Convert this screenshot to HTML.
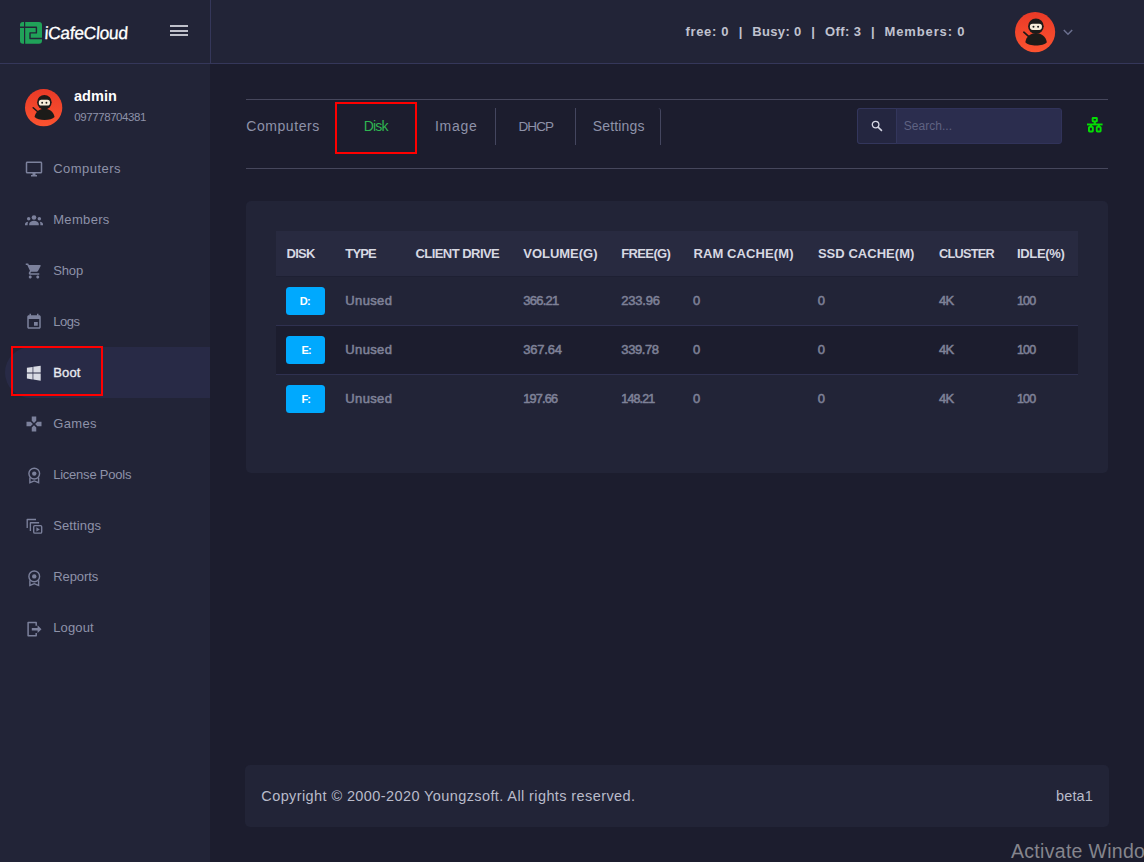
<!DOCTYPE html>
<html><head><meta charset="utf-8"><title>iCafeCloud</title>
<style>
*{box-sizing:border-box;margin:0;padding:0}
html,body{width:1144px;height:862px;overflow:hidden;background:#1c1d2e;font-family:"Liberation Sans",sans-serif;color:#8e92a9}
.abs{position:absolute}
.t{position:absolute;white-space:pre;line-height:1}
#hdr{position:absolute;left:0;top:0;width:1144px;height:64px;background:#222437;border-bottom:1px solid #35375a}
#vline{position:absolute;left:210px;top:0;width:1px;height:63px;background:#35375a}
#side{position:absolute;left:0;top:64px;width:210px;height:798px;background:#222437}
#act{position:absolute;left:4.5px;top:347px;width:205.5px;height:51px;background:#282a46;border-radius:25.5px 0 0 25.5px}
#redm{position:absolute;left:11px;top:346px;width:92px;height:50px;border:2px solid #ff0000}
#redt{position:absolute;left:335px;top:102px;width:82px;height:52px;border:2px solid #ff0000}
.hl{position:absolute;left:246px;width:862px;height:1px;background:#46475c}
.sep{position:absolute;top:108px;width:1px;height:37px;background:#44465f}
#card{position:absolute;left:246px;top:201px;width:862px;height:272px;background:#222437;border-radius:5px}
#thead{position:absolute;left:276px;top:231px;width:802px;height:45px;background:#282a40}
.rl{position:absolute;left:276px;width:802px;height:1px;background:#2f3150}
#row2{position:absolute;left:276px;top:325px;width:802px;height:49px;background:#1c1d2e}
.btn{position:absolute;left:286px;width:39px;height:28px;background:#00a9fe;border-radius:3.5px}
#foot{position:absolute;left:245px;top:765.4px;width:864px;height:61.6px;background:#222437;border-radius:5px}
svg{position:absolute;overflow:visible}
.mi{fill:#7c819c}.wi{fill:#d9dbe4}
</style></head><body>
<div id="hdr"></div><div id="vline"></div>
<div id="side"></div>
<div id="act"></div>

<!-- logo -->
<svg style="left:19.8px;top:22.2px" width="22" height="22" viewBox="0 0 22 22"><rect x="0" y="0" width="22" height="21.8" rx="3" fill="#20a259"/><g stroke="#222437" fill="none" stroke-linecap="butt" stroke-linejoin="round"><path d="M4.6 0V22" stroke-width="1.2"/><path d="M0 5.2H16.4V10.9H10V16.5H22" stroke-width="1.4"/></g></svg>
<div class="t" style="left:43.6px;top:24.6px;font-size:17.5px;color:#fff;letter-spacing:-.35px;-webkit-text-stroke:.3px #fff;transform:skewX(-4deg);transform-origin:0 100%">iCafeCloud</div>
<div class="abs" style="left:170px;top:25px;width:18px;height:2px;background:#bfc0ca"></div>
<div class="abs" style="left:170px;top:29.8px;width:18px;height:2px;background:#bfc0ca"></div>
<div class="abs" style="left:170px;top:34.2px;width:18px;height:2px;background:#bfc0ca"></div>

<!-- avatars -->
<svg style="left:24.9px;top:88.7px" width="37.3" height="37.3" viewBox="0 0 40 40"><linearGradient id="ng1" x1="0" y1="0" x2="0" y2="1"><stop offset="0" stop-color="#e93a27"/><stop offset="1" stop-color="#fb5330"/></linearGradient><circle cx="20" cy="20" r="20" fill="url(#ng1)"/><path d="M8.8 20.1L14.6 25.2" stroke="#1c1b19" stroke-width="1.7" stroke-linecap="round"/><circle cx="20.8" cy="14.2" r="7.8" fill="#1c1b19"/><path d="M10.3 30C11.3 24.2 15.5 21.2 20.9 21.2C26.2 21.2 30.5 24.2 31.7 30C28.2 34.3 13.8 34.3 10.3 30Z" fill="#1c1b19"/><rect x="14.8" y="11.6" width="12" height="6.2" rx="2.8" fill="#f6edd9"/><circle cx="18.4" cy="14.8" r="1" fill="#1c1b19"/><circle cx="23" cy="14.8" r="1" fill="#1c1b19"/></svg>
<svg style="left:1015px;top:12px" width="40.2" height="40.2" viewBox="0 0 40 40"><linearGradient id="ng2" x1="0" y1="0" x2="0" y2="1"><stop offset="0" stop-color="#e93a27"/><stop offset="1" stop-color="#fb5330"/></linearGradient><circle cx="20" cy="20" r="20" fill="url(#ng2)"/><path d="M8.8 20.1L14.6 25.2" stroke="#1c1b19" stroke-width="1.7" stroke-linecap="round"/><circle cx="20.8" cy="14.2" r="7.8" fill="#1c1b19"/><path d="M10.3 30C11.3 24.2 15.5 21.2 20.9 21.2C26.2 21.2 30.5 24.2 31.7 30C28.2 34.3 13.8 34.3 10.3 30Z" fill="#1c1b19"/><rect x="14.8" y="11.6" width="12" height="6.2" rx="2.8" fill="#f6edd9"/><circle cx="18.4" cy="14.8" r="1" fill="#1c1b19"/><circle cx="23" cy="14.8" r="1" fill="#1c1b19"/></svg>

<svg style="left:1063px;top:28.7px" width="10" height="7" viewBox="0 0 10 7"><path d="M0.8 1L5 5.2L9.2 1" fill="none" stroke="#6c7090" stroke-width="1.5"/></svg>

<!-- menu icons -->
<svg class="mi" style="left:24.8px;top:160.3px" width="18" height="18" viewBox="0 0 24 24"><path d="M21 2H3c-1.1 0-2 .9-2 2v12c0 1.1.9 2 2 2h7v2H8v2h8v-2h-2v-2h7c1.1 0 2-.9 2-2V4c0-1.1-.9-2-2-2zm0 14H3V4h18v12z"/></svg>
<svg class="mi" style="left:24.8px;top:211.3px" width="18" height="18" viewBox="0 0 24 24"><circle cx="12" cy="8.6" r="3.1"/><circle cx="4.9" cy="10.3" r="2.3"/><circle cx="19.1" cy="10.3" r="2.3"/><path d="M5.6 19v-1.6c0-2.6 3-4.3 6.4-4.3s6.4 1.700 6.400 4.300V19z"/><path d="M0 19v-1.300c0-1.800 1.800-3.100 4.300-3.300-.5.800-.800 1.800-.800 2.900V19z"/><path d="M24 19v-1.300c0-1.800-1.800-3.100-4.300-3.300.5.800.800 1.800.800 2.900V19z"/></svg>
<svg class="mi" style="left:24.8px;top:262.3px" width="18" height="18" viewBox="0 0 24 24"><path d="M7 18c-1.100 0-1.990.9-1.990 2S5.900 22 7 22s2-.9 2-2-.9-2-2-2zM1 2v2h2l3.600 7.590-1.350 2.450c-.16.280-.25.610-.25.960 0 1.100.9 2 2 2h12v-2H7.420c-.14 0-.25-.11-.25-.25l.030-.12.900-1.630h7.450c.75 0 1.410-.41 1.750-1.030l3.580-6.490c.080-.14.120-.31.120-.48 0-.55-.45-1-1-1H5.210l-.94-2H1zm16 16c-1.100 0-1.990.9-1.990 2s.89 2 1.990 2 2-.9 2-2-.9-2-2-2z"/></svg>
<svg class="mi" style="left:24.8px;top:313.3px" width="18" height="18" viewBox="0 0 24 24"><path d="M17 12h-5v5h5v-5zM16 1v2H8V1H6v2H5c-1.110 0-1.990.9-1.990 2L3 19c0 1.100.89 2 2 2h14c1.100 0 2-.9 2-2V5c0-1.100-.9-2-2-2h-1V1h-2zm3 18H5V8h14v11z"/></svg>
<svg class="wi" style="left:24.8px;top:364.3px" width="18" height="18" viewBox="0 0 18 18"><polygon points="1.90,3.70 7.60,2.90 7.60,8.60 1.90,8.60"/><polygon points="8.30,2.80 15.70,1.70 15.70,8.60 8.30,8.60"/><polygon points="1.90,9.40 7.60,9.40 7.60,15.40 1.90,14.60"/><polygon points="8.30,9.40 15.70,9.40 15.70,16.70 8.30,15.60"/></svg>
<svg class="mi" style="left:24.8px;top:415.3px" width="18" height="18" viewBox="0 0 24 24"><path d="M15 7.500V2H9v5.500l3 3 3-3zM7.500 9H2v6h5.500l3-3-3-3zM9 16.500V22h6v-5.500l-3-3-3 3zM16.500 9l-3 3 3 3H22V9h-5.500z"/></svg>
<svg class="mi" style="left:24.8px;top:466.3px" width="18" height="18" viewBox="0 0 18 18"><g fill="none" stroke="#7c819c" stroke-width="1.4"><circle cx="9.25" cy="7.6" r="5.35"/><path d="M4.9 11.4V16.600L9.250 14.900L13.600 16.600V11.400" stroke-linejoin="miter"/></g><circle cx="9.25" cy="7.6" r="2.2"/></svg>
<svg class="mi" style="left:24.8px;top:517.3px" width="18" height="18" viewBox="0 0 18 18"><g fill="none" stroke="#7c819c" stroke-width="1.35" stroke-linejoin="round"><path d="M2.20 10.90V2.50H11.00"/><path d="M5.40 13.90V5.70H14.10"/><rect x="8.70" y="8.60" width="8.00" height="7.50" rx="1.2"/></g><path d="M11.40 10.30V14.50L14.80 12.40Z"/></svg>
<svg class="mi" style="left:24.8px;top:568.3px" width="18" height="18" viewBox="0 0 18 18"><g fill="none" stroke="#7c819c" stroke-width="1.4"><circle cx="9.25" cy="8.4" r="5.35"/><path d="M4.9 12.2V17.400L9.250 15.700L13.600 17.400V12.200" stroke-linejoin="miter"/></g><circle cx="9.25" cy="8.4" r="2.2"/></svg>
<svg class="mi" style="left:24.8px;top:619.3px" width="18" height="18" viewBox="0 0 18 18"><path fill="none" stroke="#7c819c" stroke-width="1.5" stroke-linejoin="round" d="M11.20 6.70V3.60H3.10V16.80H11.20V13.90"/><path d="M6.80 8.90H12.60V6.30L16.50 10.20L12.60 14.10V11.60H6.80Z"/></svg>

<div id="redm"></div>

<!-- tabs -->
<div class="hl" style="top:99px"></div><div class="hl" style="top:168px"></div>
<div id="redt"></div>
<div class="sep" style="left:495px"></div><div class="sep" style="left:575px"></div><div class="abs" style="left:651px;top:108px;width:10px;height:37px;border-right:1px solid #44465f;border-top-right-radius:3px"></div>
<div class="abs" style="left:857px;top:108px;width:205px;height:35.7px;background:#2b2d4e;border-radius:3px;border:1px solid #31335a"></div>
<div class="abs" style="left:857px;top:108px;width:40px;height:35.7px;background:#242640;border-radius:3px 0 0 3px;border:1px solid #33365c"></div>
<svg style="left:870.8px;top:119.6px" width="12" height="12" viewBox="0 0 12 12"><circle cx="4.6" cy="4.6" r="3.3" fill="none" stroke="#d6d7e4" stroke-width="1.3"/><path d="M7.1 7.1L10.9 10.9" stroke="#d6d7e4" stroke-width="1.5"/></svg>
<svg style="left:1087.2px;top:116.6px" width="15.6" height="15.6" viewBox="0 0 15.6 15.6"><g fill="none" stroke="#04de04" stroke-width="1.9"><rect x="5.65" y="0.95" width="4.2" height="3.4" rx=".4"/><rect x="1.95" y="9.9" width="3.9" height="4.6" rx=".7"/><rect x="9.75" y="9.9" width="3.9" height="4.6" rx=".7"/><path d="M7.75 4.5V7M3.9 8V9.5M11.7 8V9.500" stroke-width="2.2"/></g><rect x="0" y="6.5" width="15.6" height="1.9" fill="#04de04"/></svg>

<!-- card -->
<div id="card"></div><div id="thead"></div><div id="row2"></div>
<div class="rl" style="top:276px;background:#1e2033"></div><div class="rl" style="top:325px"></div><div class="rl" style="top:374px"></div>
<div class="btn" style="top:287px"></div><div class="btn" style="top:336px"></div><div class="btn" style="top:385px"></div>
<div id="foot"></div>
<div class="t" style="left:685.40px;top:25px;font-size:13px;font-weight:bold;color:#c0c2cf;letter-spacing:0.678px;">free: 0</div>
<div class="t" style="left:738.68px;top:25px;font-size:13px;font-weight:bold;color:#c0c2cf;letter-spacing:0.000px;">|</div>
<div class="t" style="left:752.20px;top:25px;font-size:13px;font-weight:bold;color:#c0c2cf;letter-spacing:0.355px;">Busy: 0</div>
<div class="t" style="left:811.28px;top:25px;font-size:13px;font-weight:bold;color:#c0c2cf;letter-spacing:0.000px;">|</div>
<div class="t" style="left:825.00px;top:25px;font-size:13px;font-weight:bold;color:#c0c2cf;letter-spacing:0.409px;">Off: 3</div>
<div class="t" style="left:871.08px;top:25px;font-size:13px;font-weight:bold;color:#c0c2cf;letter-spacing:0.000px;">|</div>
<div class="t" style="left:884.60px;top:25px;font-size:13px;font-weight:bold;color:#c0c2cf;letter-spacing:0.861px;">Members: 0</div>
<div class="t" style="left:74.00px;top:89px;font-size:14.5px;font-weight:bold;color:#ffffff;letter-spacing:0.049px;">admin</div>
<div class="t" style="left:74.30px;top:112px;font-size:11.5px;font-weight:normal;color:#8e92a9;letter-spacing:-0.423px;">097778704381</div>
<div class="t" style="left:53.20px;top:162px;font-size:13px;font-weight:normal;color:#8e92a9;letter-spacing:0.465px;">Computers</div>
<div class="t" style="left:53.20px;top:213px;font-size:13px;font-weight:normal;color:#8e92a9;letter-spacing:0.335px;">Members</div>
<div class="t" style="left:53.20px;top:264px;font-size:13px;font-weight:normal;color:#8e92a9;letter-spacing:-0.125px;">Shop</div>
<div class="t" style="left:53.20px;top:315px;font-size:13px;font-weight:normal;color:#8e92a9;letter-spacing:-0.434px;">Logs</div>
<div class="t" style="left:53.30px;top:366px;font-size:13px;font-weight:normal;color:#e9eaf0;letter-spacing:0.117px;-webkit-text-stroke:0.35px #e9eaf0;">Boot</div>
<div class="t" style="left:53.20px;top:417px;font-size:13px;font-weight:normal;color:#8e92a9;letter-spacing:0.348px;">Games</div>
<div class="t" style="left:53.20px;top:468px;font-size:13px;font-weight:normal;color:#8e92a9;letter-spacing:-0.229px;">License Pools</div>
<div class="t" style="left:53.20px;top:519px;font-size:13px;font-weight:normal;color:#8e92a9;letter-spacing:0.131px;">Settings</div>
<div class="t" style="left:53.20px;top:570px;font-size:13px;font-weight:normal;color:#8e92a9;letter-spacing:-0.072px;">Reports</div>
<div class="t" style="left:53.20px;top:621px;font-size:13px;font-weight:normal;color:#8e92a9;letter-spacing:0.147px;">Logout</div>
<div class="t" style="left:246.30px;top:119px;font-size:14px;font-weight:normal;color:#8e92a9;letter-spacing:0.554px;">Computers</div>
<div class="t" style="left:363.70px;top:119px;font-size:14px;font-weight:normal;color:#2fb551;letter-spacing:-0.811px;">Disk</div>
<div class="t" style="left:435.00px;top:119px;font-size:14px;font-weight:normal;color:#8e92a9;letter-spacing:0.720px;">Image</div>
<div class="t" style="left:518.40px;top:120px;font-size:13.5px;font-weight:normal;color:#8e92a9;letter-spacing:-0.850px;">DHCP</div>
<div class="t" style="left:592.70px;top:119px;font-size:14px;font-weight:normal;color:#8e92a9;letter-spacing:0.172px;">Settings</div>
<div class="t" style="left:903.70px;top:120px;font-size:12px;font-weight:normal;color:#5f6282;letter-spacing:0.034px;">Search...</div>
<div class="t" style="left:286.50px;top:247px;font-size:13px;font-weight:bold;color:#d7d8e2;letter-spacing:-0.688px;">DISK</div>
<div class="t" style="left:345.30px;top:247px;font-size:13px;font-weight:bold;color:#d7d8e2;letter-spacing:-0.850px;">TYPE</div>
<div class="t" style="left:415.40px;top:247px;font-size:13px;font-weight:bold;color:#d7d8e2;letter-spacing:-0.536px;">CLIENT DRIVE</div>
<div class="t" style="left:523.30px;top:247px;font-size:13px;font-weight:bold;color:#d7d8e2;letter-spacing:-0.024px;">VOLUME(G)</div>
<div class="t" style="left:621.30px;top:247px;font-size:13px;font-weight:bold;color:#d7d8e2;letter-spacing:-0.642px;">FREE(G)</div>
<div class="t" style="left:693.40px;top:247px;font-size:13px;font-weight:bold;color:#d7d8e2;letter-spacing:0.106px;">RAM CACHE(M)</div>
<div class="t" style="left:817.90px;top:247px;font-size:13px;font-weight:bold;color:#d7d8e2;letter-spacing:0.040px;">SSD CACHE(M)</div>
<div class="t" style="left:939.10px;top:248px;font-size:12.75px;font-weight:bold;color:#d7d8e2;letter-spacing:-0.770px;">CLUSTER</div>
<div class="t" style="left:1017.00px;top:247px;font-size:13px;font-weight:bold;color:#d7d8e2;letter-spacing:-0.341px;">IDLE(%)</div>
<div class="t" style="left:345.30px;top:294px;font-size:13px;font-weight:normal;color:#7e8197;letter-spacing:0.357px;-webkit-text-stroke:0.55px #7e8197;">Unused</div>
<div class="t" style="left:523.30px;top:294px;font-size:13px;font-weight:normal;color:#7e8197;letter-spacing:-0.753px;-webkit-text-stroke:0.55px #7e8197;">366.21</div>
<div class="t" style="left:621.30px;top:294px;font-size:13px;font-weight:normal;color:#7e8197;letter-spacing:-0.233px;-webkit-text-stroke:0.55px #7e8197;">233.96</div>
<div class="t" style="left:693.03px;top:294px;font-size:13px;font-weight:normal;color:#7e8197;letter-spacing:0.000px;-webkit-text-stroke:0.55px #7e8197;">0</div>
<div class="t" style="left:817.73px;top:294px;font-size:13px;font-weight:normal;color:#7e8197;letter-spacing:0.000px;-webkit-text-stroke:0.55px #7e8197;">0</div>
<div class="t" style="left:939.10px;top:294px;font-size:13px;font-weight:normal;color:#7e8197;letter-spacing:-0.850px;-webkit-text-stroke:0.55px #7e8197;">4K</div>
<div class="t" style="left:1017.00px;top:295px;font-size:12.5px;font-weight:normal;color:#7e8197;letter-spacing:-0.850px;-webkit-text-stroke:0.55px #7e8197;">100</div>
<div class="t" style="left:299.80px;top:296px;font-size:11px;font-weight:bold;color:#ffffff;letter-spacing:-0.750px;">D:</div>
<div class="t" style="left:345.30px;top:343px;font-size:13px;font-weight:normal;color:#7e8197;letter-spacing:0.357px;-webkit-text-stroke:0.55px #7e8197;">Unused</div>
<div class="t" style="left:523.30px;top:343px;font-size:13px;font-weight:normal;color:#7e8197;letter-spacing:-0.233px;-webkit-text-stroke:0.55px #7e8197;">367.64</div>
<div class="t" style="left:621.30px;top:343px;font-size:13px;font-weight:normal;color:#7e8197;letter-spacing:-0.393px;-webkit-text-stroke:0.55px #7e8197;">339.78</div>
<div class="t" style="left:693.03px;top:343px;font-size:13px;font-weight:normal;color:#7e8197;letter-spacing:0.000px;-webkit-text-stroke:0.55px #7e8197;">0</div>
<div class="t" style="left:817.73px;top:343px;font-size:13px;font-weight:normal;color:#7e8197;letter-spacing:0.000px;-webkit-text-stroke:0.55px #7e8197;">0</div>
<div class="t" style="left:939.10px;top:343px;font-size:13px;font-weight:normal;color:#7e8197;letter-spacing:-0.850px;-webkit-text-stroke:0.55px #7e8197;">4K</div>
<div class="t" style="left:1017.00px;top:344px;font-size:12.5px;font-weight:normal;color:#7e8197;letter-spacing:-0.850px;-webkit-text-stroke:0.55px #7e8197;">100</div>
<div class="t" style="left:301.40px;top:345px;font-size:11px;font-weight:bold;color:#ffffff;letter-spacing:-0.750px;">E:</div>
<div class="t" style="left:345.30px;top:392px;font-size:13px;font-weight:normal;color:#7e8197;letter-spacing:0.357px;-webkit-text-stroke:0.55px #7e8197;">Unused</div>
<div class="t" style="left:523.30px;top:393px;font-size:12.75px;font-weight:normal;color:#7e8197;letter-spacing:-0.820px;-webkit-text-stroke:0.55px #7e8197;">197.66</div>
<div class="t" style="left:621.30px;top:393px;font-size:12.5px;font-weight:normal;color:#7e8197;letter-spacing:-0.850px;-webkit-text-stroke:0.55px #7e8197;">148.21</div>
<div class="t" style="left:693.03px;top:392px;font-size:13px;font-weight:normal;color:#7e8197;letter-spacing:0.000px;-webkit-text-stroke:0.55px #7e8197;">0</div>
<div class="t" style="left:817.73px;top:392px;font-size:13px;font-weight:normal;color:#7e8197;letter-spacing:0.000px;-webkit-text-stroke:0.55px #7e8197;">0</div>
<div class="t" style="left:939.10px;top:392px;font-size:13px;font-weight:normal;color:#7e8197;letter-spacing:-0.850px;-webkit-text-stroke:0.55px #7e8197;">4K</div>
<div class="t" style="left:1017.00px;top:393px;font-size:12.5px;font-weight:normal;color:#7e8197;letter-spacing:-0.850px;-webkit-text-stroke:0.55px #7e8197;">100</div>
<div class="t" style="left:301.40px;top:394px;font-size:11px;font-weight:bold;color:#ffffff;letter-spacing:-0.750px;">F:</div>
<div class="t" style="left:261.30px;top:789px;font-size:14.5px;font-weight:normal;color:#b9bbca;letter-spacing:0.401px;">Copyright © 2000-2020 Youngzsoft. All rights reserved.</div>
<div class="t" style="left:1056.00px;top:789px;font-size:14.5px;font-weight:normal;color:#b9bbca;letter-spacing:0.151px;">beta1</div>
<div class="t" style="left:1011px;top:842px;font-size:19.5px;color:#85858d;letter-spacing:.3px">Activate Windows</div>
</body></html>
